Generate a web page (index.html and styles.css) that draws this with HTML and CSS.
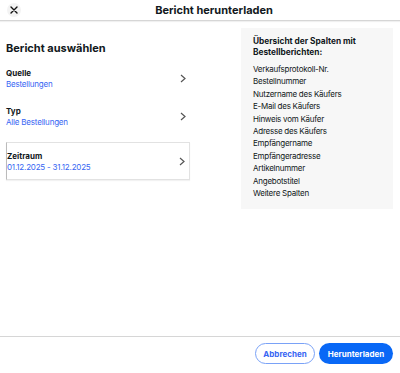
FILE: index.html
```html
<!DOCTYPE html>
<html lang="de">
<head>
    <meta charset="UTF-8">
    <meta name="viewport" content="width=device-width, initial-scale=1.0">
    <title>Bericht herunterladen</title>
    <link rel="stylesheet" href="styles.css">
</head>
<body>
    <div class="dialog">
        <header class="dialog-header">
            <button class="close-btn" aria-label="Schließen">
                <svg width="8" height="8" viewBox="0 0 8 8">
                    <path d="M1 1 L7 7 M7 1 L1 7" stroke="#111" stroke-width="1.4" stroke-linecap="round"/>
                </svg>
            </button>
            <h1 class="dialog-title">Bericht herunterladen</h1>
        </header>

        <main class="dialog-body">
            <section class="report-select">
                <h2 class="section-title">Bericht auswählen</h2>

                <div class="option-row">
                    <div class="option-text">
                        <div class="option-label">Quelle</div>
                        <div class="option-value">Bestellungen</div>
                    </div>
                    <svg class="chevron" width="6" height="9" viewBox="0 0 6 9">
                        <path d="M1 1 L5 4.5 L1 8" fill="none" stroke="#555" stroke-width="1.2"/>
                    </svg>
                </div>

                <div class="option-row">
                    <div class="option-text">
                        <div class="option-label">Typ</div>
                        <div class="option-value">Alle Bestellungen</div>
                    </div>
                    <svg class="chevron" width="6" height="9" viewBox="0 0 6 9">
                        <path d="M1 1 L5 4.5 L1 8" fill="none" stroke="#555" stroke-width="1.2"/>
                    </svg>
                </div>

                <div class="option-row focused">
                    <div class="option-text">
                        <div class="option-label">Zeitraum</div>
                        <div class="option-value">01.12.2025 - 31.12.2025</div>
                    </div>
                    <svg class="chevron" width="6" height="9" viewBox="0 0 6 9">
                        <path d="M1 1 L5 4.5 L1 8" fill="none" stroke="#555" stroke-width="1.2"/>
                    </svg>
                </div>
            </section>

            <aside class="columns-panel">
                <h3 class="panel-title">Übersicht der Spalten mit Bestellberichten:</h3>
                <ul class="column-list">
                    <li>Verkaufsprotokoll-Nr.</li>
                    <li>Bestellnummer</li>
                    <li>Nutzername des Käufers</li>
                    <li>E-Mail des Käufers</li>
                    <li>Hinweis vom Käufer</li>
                    <li>Adresse des Käufers</li>
                    <li>Empfängername</li>
                    <li>Empfängeradresse</li>
                    <li>Artikelnummer</li>
                    <li>Angebotstitel</li>
                    <li>Weitere Spalten</li>
                </ul>
            </aside>
        </main>

        <footer class="dialog-footer">
            <button class="btn btn-secondary">Abbrechen</button>
            <button class="btn btn-primary">Herunterladen</button>
        </footer>
    </div>
</body>
</html>
```

FILE: styles.css
```css
:root {
    --text: #111820;
    --blue: #0968f6;
    --link: #3665f3;
    --line: #d6d6d6;
    --panel-bg: #f7f7f7;
}

* {
    margin: 0;
    padding: 0;
    box-sizing: border-box;
}

body {
    font-family: Inter, 'Open Sans', sans-serif;
    color: var(--text);
    background: #fff;
    width: 400px;
    height: 373px;
    overflow: hidden;
}

.dialog {
    display: flex;
    flex-direction: column;
    height: 100%;
}

.dialog-header {
    display: flex;
    align-items: center;
    height: 21px;
    border-bottom: 1px solid var(--line);
    box-shadow: 0 1px 1px rgba(0, 0, 0, 0.06);
}

.close-btn {
    width: 14px;
    height: 14px;
    margin: 0 0 0 7px;
    border: none;
    border-radius: 50%;
    background: #f3f3f3;
    display: flex;
    justify-content: center;
    align-items: center;
}

.dialog-title {
    flex: 1;
    margin-right: -7px;
    text-align: center;
    font-size: 11px;
    font-weight: 700;
    line-height: 20px;
}

.dialog-body {
    flex: 1;
    display: flex;
    justify-content: space-between;
    padding: 7px 7px 0 6px;
}

.report-select {
    width: 184px;
    padding-top: 13px;
}

.section-title {
    font-size: 11px;
    font-weight: 700;
    line-height: 14px;
    margin-bottom: 4px;
}

.option-row {
    display: flex;
    align-items: center;
    justify-content: space-between;
    height: 38px;
    padding-right: 2px;
}

.option-row.focused {
    margin-top: 7px;
    border: 1px solid #e2e2e2;
    border-left-color: #bbb;
    box-shadow: 0 1px 1px rgba(0, 0, 0, 0.05);
}

.option-label {
    font-size: 8px;
    font-weight: 700;
    line-height: 11px;
}

.option-value {
    font-size: 8px;
    line-height: 10px;
    letter-spacing: -0.2px;
    color: var(--link);
}

.chevron {
    margin-right: 2px;
}

.columns-panel {
    width: 152px;
    height: 181px;
    background: var(--panel-bg);
    padding: 8px 12px 0;
}

.panel-title {
    font-size: 8.3px;
    font-weight: 700;
    line-height: 11px;
    margin-bottom: 5px;
}

.column-list {
    list-style: none;
    font-size: 8px;
    line-height: 12.4px;
    letter-spacing: -0.25px;
}

.dialog-footer {
    display: flex;
    justify-content: flex-end;
    align-items: center;
    gap: 4px;
    height: 37px;
    padding: 0 7px 3px;
    border-top: 1px solid var(--line);
}

.btn {
    height: 21px;
    border-radius: 11px;
    font-family: inherit;
    font-size: 8px;
    font-weight: 700;
}

.btn-secondary {
    width: 60px;
    background: #fff;
    color: var(--link);
    border: 1px solid #7aa2f7;
}

.btn-primary {
    width: 74px;
    background: var(--blue);
    color: #fff;
    border: none;
}
```
